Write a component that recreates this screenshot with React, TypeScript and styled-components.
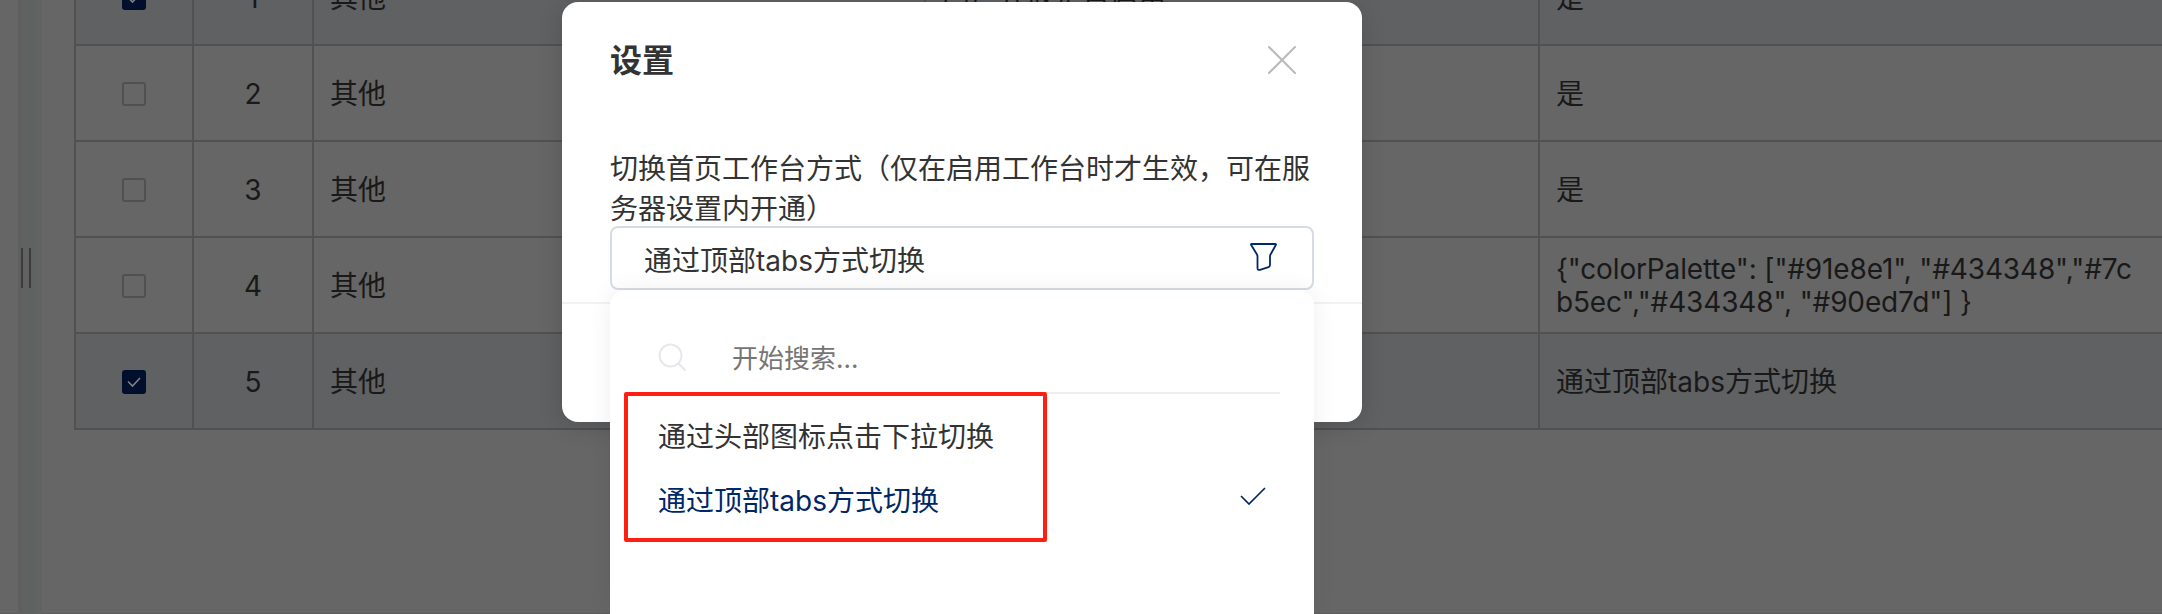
import React from 'react';
import styled, { createGlobalStyle } from 'styled-components';

const Global = createGlobalStyle`
  * { box-sizing: border-box; }
  body { margin: 0; background: #666; overflow: hidden; }
`;

const Page = styled.div`
  position: relative;
  display: flex;
  width: 2162px;
  height: 614px;
  overflow: hidden;
  background: #666;
  color: #191919;
  font-family: Inter, "Noto Sans CJK SC", sans-serif;
  font-size: 28px;
  box-shadow: inset 0 -1px #5c5c5c;
`;

const Sidebar = styled.div`
  flex: none;
  width: 18px;
`;

const Gutter = styled.div`
  flex: none;
  width: 24px;
  padding: 248px 0 0 3px;
  background: linear-gradient(90deg, #5f5f5f 0, #616262 10px, #5f6261 10px, #606463 24px);
`;

const Handle = styled.div`
  width: 10px;
  height: 40px;
  border: solid #3b3b3b;
  border-width: 0 2px;
`;

const TableArea = styled.div`
  flex: 1;
  padding-left: 32px;
`;

const Table = styled.div`
  width: 2100px;
  margin-top: -50px;
  border-left: 2px solid #515151;
`;

const Row = styled.div<{ $selected?: boolean }>`
  display: grid;
  grid-template-columns: 118px 120px 612px 614px 1fr;
  height: 96px;
  border-bottom: 2px solid #515151;
  background: ${p => (p.$selected ? '#606163' : '#666')};
`;

const Cell = styled.div<{ $center?: boolean }>`
  display: flex;
  align-items: center;
  justify-content: ${p => (p.$center ? 'center' : 'flex-start')};
  padding: ${p => (p.$center ? '2px 0 0' : '2px 16px 0')};
  border-right: 2px solid #515151;
  line-height: 34px;
`;

const Value = styled.div<{ $tight?: boolean }>`
  white-space: pre;
  letter-spacing: ${p => (p.$tight ? '-0.15px' : 'normal')};
  line-height: ${p => (p.$tight ? '33px' : '34px')};
`;

const Box = styled.span<{ $checked?: boolean }>`
  display: flex;
  align-items: center;
  justify-content: center;
  width: 24px;
  height: 24px;
  border: 2px solid ${p => (p.$checked ? '#000f2c' : '#505050')};
  border-radius: 3px;
  background: ${p => (p.$checked ? '#000f2c' : 'transparent')};
`;

const Modal = styled.div`
  position: absolute;
  left: 562px;
  top: 2px;
  width: 800px;
  height: 420px;
  border-radius: 16px;
  background: #fff;
  color: #333;
  box-shadow: 0 4px 24px rgba(0, 0, 0, 0.15);
`;

const Header = styled.div`
  display: flex;
  align-items: center;
  justify-content: space-between;
  height: 116px;
  padding: 0 66px 0 48px;
`;

const Title = styled.div`
  padding-bottom: 4px;
  font-size: 32px;
  font-weight: 700;
`;

const Body = styled.div`
  height: 186px;
  padding: 31px 48px 0;
  border-bottom: 2px solid #f2f2f2;
`;

const Label = styled.div`
  height: 77px;
  line-height: 40px;
  white-space: pre;
`;

const Select = styled.div`
  display: flex;
  align-items: center;
  justify-content: space-between;
  height: 64px;
  padding: 1px 35px 0 32px;
  border: 2px solid #d6dbe6;
  border-radius: 8px;
`;

const Dropdown = styled.div`
  position: absolute;
  left: 610px;
  top: 290px;
  width: 704px;
  height: 324px;
  padding: 28px 34px 0 14px;
  border-radius: 16px 16px 0 0;
  background: #fff;
  color: #333;
  box-shadow: 0 0 24px rgba(0, 0, 0, 0.07);
`;

const Search = styled.div`
  display: flex;
  align-items: center;
  height: 76px;
  margin-left: 14px;
  padding: 4px 0 0 20px;
  gap: 46px;
  border-bottom: 2px solid #eee;
  color: #757575;
  font-size: 26px;
`;

const Placeholder = styled.span`
  padding-bottom: 2px;
`;

const Option = styled.div<{ $active?: boolean }>`
  display: flex;
  align-items: center;
  justify-content: space-between;
  height: 64px;
  padding: 0 14px 0 34px;
  color: ${p => (p.$active ? '#002766' : '#333')};
`;

const Options = styled.div`
  padding-top: 9px;
`;

const Highlight = styled.div`
  position: absolute;
  left: 624px;
  top: 392px;
  width: 423px;
  height: 150px;
  border: 4px solid #ff1e12;
  border-radius: 2px;
`;

const Icon = styled.svg`
  flex: none;
  fill: none;
  stroke: currentColor;
`;

const CloseIcon = styled(Icon)`
  color: #b9b9b9;
`;

const FilterIcon = styled(Icon)`
  margin-bottom: 3px;
  color: #002766;
`;

const SearchIcon = styled(Icon)`
  color: #e8e8ec;
`;

const CheckIcon = styled(Icon)`
  margin-bottom: 6px;
`;

const rows = [
  { n: 1, key: '门户开放是否启用', value: '是', selected: true },
  { n: 2, key: '', value: '是' },
  { n: 3, key: '', value: '是' },
  { n: 4, key: '', value: '{"colorPalette": ["#91e8e1", "#434348","#7c\nb5ec","#434348", "#90ed7d"] }', tight: true },
  { n: 5, key: '', value: '通过顶部tabs方式切换', selected: true },
];

export default function App() {
  return (
    <Page>
      <Global />
      <Sidebar />
      <Gutter><Handle /></Gutter>
      <TableArea>
        <Table>
          {rows.map(r => (
            <Row key={r.n} $selected={r.selected}>
              <Cell $center>
                <Box $checked={r.selected}>
                  {r.selected && (
                    <Icon width="14" height="12" viewBox="0 0 14 12" strokeWidth="1.6" color="#808285">
                      <path d="M1 5.500 5.500 10 13 2" />
                    </Icon>
                  )}
                </Box>
              </Cell>
              <Cell $center>{r.n}</Cell>
              <Cell>其他</Cell>
              <Cell>{r.key}</Cell>
              <Cell><Value $tight={r.tight}>{r.value}</Value></Cell>
            </Row>
          ))}
        </Table>
      </TableArea>
      <Modal>
        <Header>
          <Title>设置</Title>
          <CloseIcon width="28" height="28" viewBox="0 0 28 28" strokeWidth="2">
            <path d="M1 1 27 27M27 1 1 27" strokeLinecap="round" />
          </CloseIcon>
        </Header>
        <Body>
          <Label>{'切换首页工作台方式（仅在启用工作台时才生效，可在服\n务器设置内开通）'}</Label>
          <Select>
            通过顶部tabs方式切换
            <FilterIcon width="27" height="28" viewBox="0 0 27 28" strokeWidth="1.800" strokeLinejoin="round">
              <path d="M2 1H25Q26.500 1 25.800 2L20.500 11.500Q20 12.500 20 13.500V22Q20 23.500 18.500 24.200L10 26.800Q7.500 27.500 7.500 25V13.500Q7.500 12.500 7 11.500L1.200 2Q.5 1 2 1Z" />
            </FilterIcon>
          </Select>
        </Body>
      </Modal>
      <Dropdown>
        <Search>
          <SearchIcon width="28" height="28" viewBox="0 0 28 28" strokeWidth="2">
            <circle cx="12.500" cy="12.500" r="11" />
            <path d="M20.500 20.500 27 27" strokeLinecap="round" />
          </SearchIcon>
          <Placeholder>开始搜索...</Placeholder>
        </Search>
        <Options>
          <Option>通过头部图标点击下拉切换</Option>
          <Option $active>
            通过顶部tabs方式切换
            <CheckIcon width="26" height="18" viewBox="0 0 26 18" strokeWidth="1.700">
              <path d="M1 9 9 17 25 1" />
            </CheckIcon>
          </Option>
        </Options>
      </Dropdown>
      <Highlight />
    </Page>
  );
}
